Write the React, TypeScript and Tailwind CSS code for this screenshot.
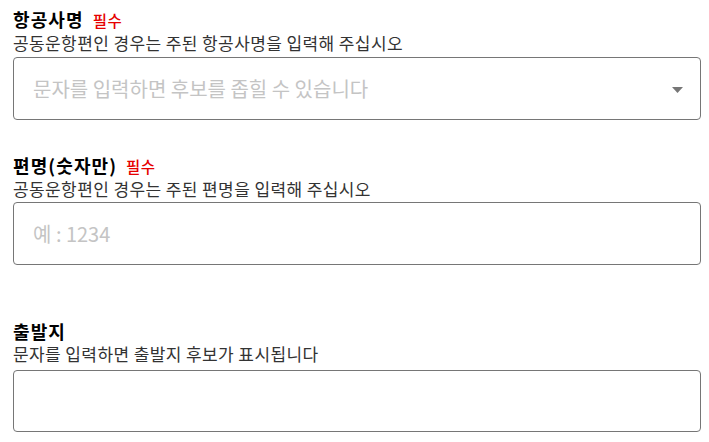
import React from "react";

const font = { fontFamily: '"Noto Sans CJK KR", "Noto Sans", sans-serif' };

function Required() {
  return (
    <span className="ml-[9px] text-[15.5px] font-medium leading-[24px] tracking-[0.5px] text-[#e60000]">필수</span>
  );
}

export default function App() {
  return (
    <div className="min-h-[442px] w-[709px] bg-white px-[13px] pr-[8px] pt-[7px] text-black" style={font}>
      {/* 항공사명 */}
      <div className="flex items-baseline">
        <span className="text-[18px] font-bold leading-[24px] tracking-[1.1px]">항공사명</span>
        <Required />
      </div>
      <p className="text-[17px] leading-[22px] tracking-[0.4px] text-[#333]">공동운항편인 경우는 주된 항공사명을 입력해 주십시오</p>
      <div className="relative mt-[3px]">
        <input
          className="box-border h-[63px] w-full rounded-[4px] border border-[#767676] bg-white pl-[19px] pr-[40px] text-[20px] outline-none placeholder:text-[#c4c4c4]"
          placeholder="문자를 입력하면 후보를 좁힐 수 있습니다"
          style={font}
        />
        <svg className="pointer-events-none absolute right-[18px] top-[30px]" width="11" height="6" viewBox="0 0 11 6">
          <path d="M0 0 L11 0 L5.5 6 Z" fill="#767676" />
        </svg>
      </div>

      {/* 편명 */}
      <div className="mt-[33px] flex items-baseline">
        <span className="text-[18px] font-bold leading-[24px] tracking-[1.1px]">편명(숫자만)</span>
        <Required />
      </div>
      <p className="text-[17px] leading-[22px] tracking-[0.4px] text-[#333]">공동운항편인 경우는 주된 편명을 입력해 주십시오</p>
      <input
        className="mt-[2px] box-border block h-[63px] w-full rounded-[4px] border border-[#767676] bg-white pl-[19px] text-[20px] outline-none placeholder:text-[#c4c4c4]"
        placeholder="예 : 1234"
        style={font}
      />

      {/* 출발지 */}
      <div className="mt-[54px] flex items-baseline">
        <span className="text-[18px] font-bold leading-[24px] tracking-[1.1px]">출발지</span>
      </div>
      <p className="text-[17px] leading-[22px] tracking-[0.4px] text-[#333]">문자를 입력하면 출발지 후보가 표시됩니다</p>
      <input
        className="mt-[5px] box-border block h-[62px] w-full rounded-[4px] border border-[#767676] bg-white pl-[19px] text-[20px] outline-none"
        style={font}
      />
    </div>
  );
}
